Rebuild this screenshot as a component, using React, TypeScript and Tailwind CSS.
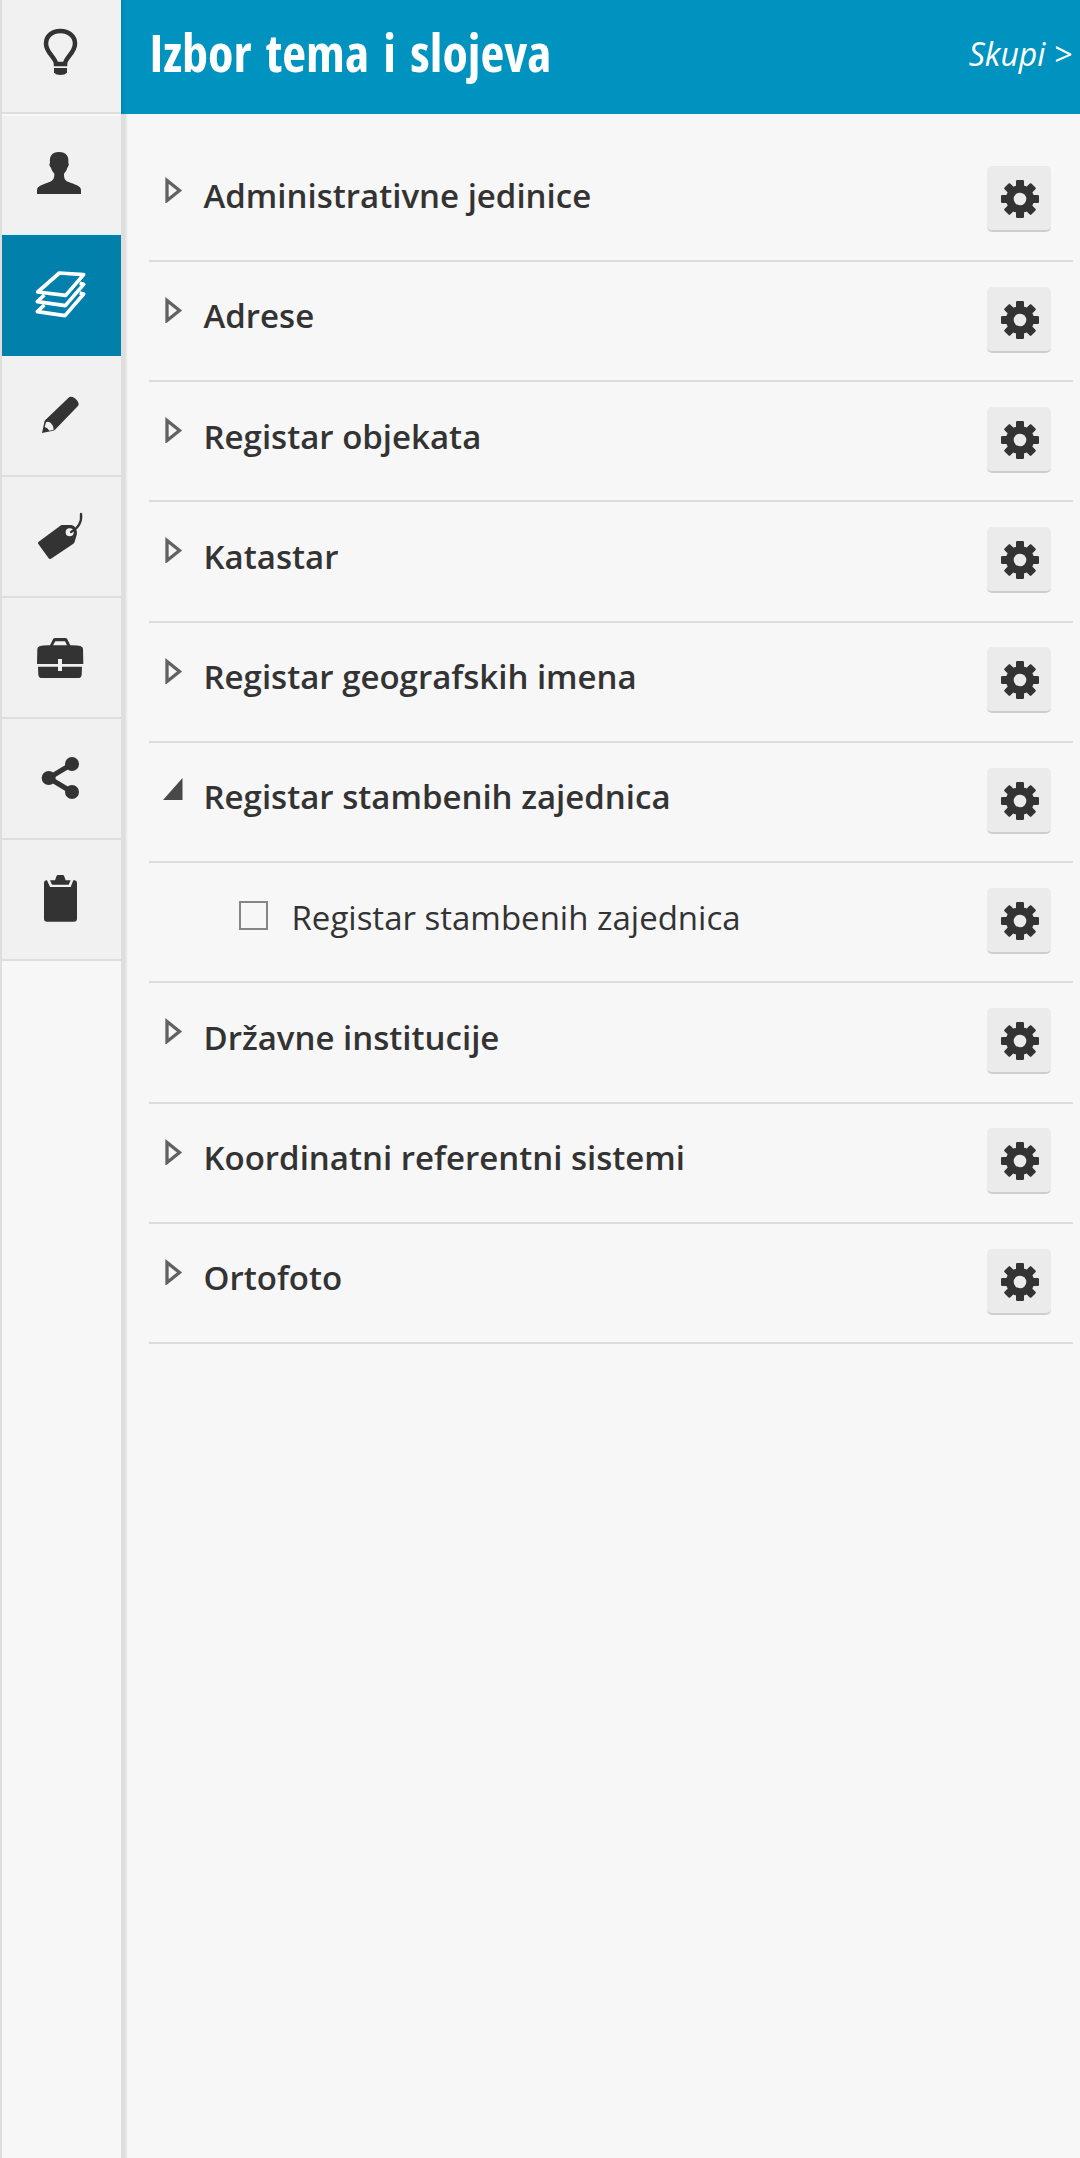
import type { ReactNode } from "react";

type Row = {
  label: string;
  height: string;
  text: string;
  button: string;
  state: "closed" | "open" | "layer";
};

const rows: Row[] = [
  { label: "Administrativne jedinice", height: "h-[120px]", text: "mt-[30px]", button: "mt-[24px]", state: "closed" },
  { label: "Adrese", height: "h-[120px]", text: "mt-[30px]", button: "mt-[25px]", state: "closed" },
  { label: "Registar objekata", height: "h-[120px]", text: "mt-[31px]", button: "mt-[25px]", state: "closed" },
  { label: "Katastar", height: "h-[121px]", text: "mt-[31px]", button: "mt-[25px]", state: "closed" },
  { label: "Registar geografskih imena", height: "h-[120px]", text: "mt-[30px]", button: "mt-[24px]", state: "closed" },
  { label: "Registar stambenih zajednica", height: "h-[120px]", text: "mt-[30px]", button: "mt-[25px]", state: "open" },
  { label: "Registar stambenih zajednica", height: "h-[120px]", text: "mt-[31px]", button: "mt-[25px]", state: "layer" },
  { label: "Državne institucije", height: "h-[121px]", text: "mt-[31px]", button: "mt-[25px]", state: "closed" },
  { label: "Koordinatni referentni sistemi", height: "h-[120px]", text: "mt-[30px]", button: "mt-[24px]", state: "closed" },
  { label: "Ortofoto", height: "h-[120px]", text: "mt-[30px]", button: "mt-[25px]", state: "closed" },
];

const tools: { name: string; box: string; active?: boolean; art: ReactNode }[] = [
  {
    name: "Pomoć",
    box: "6 -21 357 357",
    art: (
      <>
        <path
          d="M181 93c-25 0-43 15-43 38 0 27 30 43 30 61h27c0-18 30-34 30-61 0-23-19-38-44-38Z"
          fill="none"
          stroke="#333"
          strokeWidth="13.5"
        />
        <path d="M162 204h39v14q-6 7-19.500 7t-19.500-7Z" />
      </>
    ),
  },
  {
    name: "Korisnik",
    box: "6 342 357 357",
    art: (
      <path d="M177 456c22 0 30 13 28 32 3 4 1 11-3 15-2 7-5 12-10 18 0 14 2 20 12 24 20 8 39 12 39 25v12H111v-12c0-13 20-17 39-25 10-4 13-10 13-24-5-6-8-11-10-18-5-4-6-11-3-15-2-19 5-32 27-32Z" />
    ),
  },
  {
    name: "Slojevi",
    box: "6 15 357 357",
    active: true,
    art: (
      <g fill="none" stroke="#fff" strokeWidth="11" strokeLinejoin="round">
        <path d="M178 129 251 134 197 196 113 186Z" />
        <path d="M133 195 112 215 196 227 251 163 239 160" />
        <path d="M133 225 112 245 195 257 251 192 239 189" />
      </g>
    ),
  },
  {
    name: "Crtanje",
    box: "6 378 357 357",
    art: (
      <>
        <path d="m208 501q4-2 10 0 14 6 18 20 0 5-3 8l-68 70q-3 3-6 3l-33 7 7-32q0-4 3-7Z" />
        <path d="M138 577q7-4 15 3 8 7 8 19l-13 3q-5-9-14-11Z" fill="#f1f1f1" />
      </>
    ),
  },
  {
    name: "Oznake",
    box: "6 21 357 357",
    art: (
      <>
        <path d="M183 166q3-2 7-1h24q9 1 13 10 4 7 4 16l-7 24q-1 4-5 7l-66 44q-4 3-7-1l-31-43q-3-4 1-7Z" />
        <circle cx="209" cy="187" r="12" fill="#f1f1f1" />
        <path
          d="M213 186c21-11 33-28 30-54"
          fill="none"
          stroke="#333"
          strokeWidth="7"
          strokeLinecap="round"
        />
      </>
    ),
  },
  {
    name: "Alati",
    box: "6 384 357 357",
    art: (
      <>
        <path d="M150 526 159 508q2-4 6-4h31q4 0 6 4l9 18q38-1 38 10l1 46h-64v-15h-12v15h-63l1-46q0-11 39-10Zm9 0h42l-6-12h-29Z" />
        <path d="M114 590h60v13h12v-13h60l-1 24q-1 10-11 10H126q-10 0-11-10Z" />
      </>
    ),
  },
  {
    name: "Dijeljenje",
    box: "6 27 357 357",
    art: (
      <>
        <path d="M216 162 146 204 216 246" fill="none" stroke="#333" strokeWidth="15" />
        <circle cx="216" cy="162" r="21" />
        <circle cx="146" cy="204" r="21" />
        <circle cx="216" cy="246" r="21" />
      </>
    ),
  },
  {
    name: "Izvještaj",
    box: "6 390 357 357",
    art: (
      <>
        <path d="M141 511h-2q-7 1-7 8v107q0 9 9 9h80q10 0 10-9V519q0-7-7-8h-4l-8 20h-62Z" />
        <path d="M150 511h15l5-14q1-2 4-2h14q3 0 4 2l5 14h15l-6 13h-50Z" />
      </>
    ),
  },
];

const teeth = [0, 45, 90, 135];

function Gear() {
  return (
    <svg viewBox="-19 -19 38 38" className="mt-[2px] ml-[2px] size-[38px]" fill="#333">
      {teeth.map((a) => (
        <rect key={a} x="-4" y="-19" width="8" height="38" rx="1.200" transform={`rotate(${a})`} />
      ))}
      <circle r="14" />
      <circle r="6.300" fill="#ebebeb" />
    </svg>
  );
}

function Marker({ state }: { state: Row["state"] }) {
  if (state === "layer") {
    return <span className="mt-[38px] ml-[90px] size-[29px] border-2 border-[#858585]" />;
  }
  return (
    <svg viewBox="0 0 22 28" className="mt-[33px] ml-[13px] h-[28px] w-[22px] blur-[0.6px]">
      {state === "open" ? (
        <path d="M1 24 20.500 2V24Z" fill="#484848" />
      ) : (
        <path d="M5 5.500V25.500L17.500 15.500Z" fill="none" stroke="#626262" strokeWidth="3.300" />
      )}
    </svg>
  );
}

function LayerRow({ row }: { row: Row }) {
  return (
    <li className={`flex items-start border-b-2 border-[#dcdcdc] ${row.height}`}>
      <Marker state={row.state} />
      <span
        className={`grow text-[33px] leading-[48px] ${row.text} ${
          row.state === "layer" ? "ml-[23.5px] font-normal" : "ml-[19.5px] font-semibold"
        }`}
      >
        {row.label}
      </span>
      <button
        aria-label="Postavke"
        className={`mr-[22px] flex h-[66px] w-[64px] shrink-0 items-center justify-center rounded-[5px] border-b-2 border-[#cecece] bg-[#ebebeb] ${row.button}`}
      >
        <Gear />
      </button>
    </li>
  );
}

export default function App() {
  return (
    <div className="flex h-[2158px] w-[1080px] overflow-hidden bg-[#f7f7f7] font-['Open_Sans',sans-serif] text-[#333]">
      <nav className="flex w-[121px] shrink-0 flex-col border-l-2 border-[#dedede]">
        {tools.map((t, i) => (
          <button
            key={t.name}
            aria-label={t.name}
            className={
              t.active
                ? "flex h-[121px] items-start bg-[#0080aa]"
                : i === 0
                  ? "flex h-[114px] items-end border-b-2 border-[#dedede] bg-[#f1f1f1]"
                  : i === 1
                    ? "flex h-[121px] items-start border-t-2 border-b-2 border-t-[#f9f9f9] border-b-[#e2f3f8] bg-[#f1f1f1]"
                    : "flex h-[121px] items-start border-b-2 border-[#dedede] bg-[#f1f1f1]"
            }
          >
            <svg viewBox={t.box} className={i === 1 ? "-mt-[2px] size-[119px]" : "size-[119px]"} fill="#333">
              {t.art}
            </svg>
          </button>
        ))}
      </nav>
      <main className="flex grow flex-col">
        <header className="flex h-[114px] items-center justify-between bg-[#0093c0] bg-linear-to-r from-[#0086b2] from-0% to-[#0093c0] to-[6px] pr-[8px] pl-[28.5px] text-white">
          <h1 className="-mt-[10px] text-[52px] leading-[70px] font-bold whitespace-nowrap [font-stretch:75%] [word-spacing:5px]">
            Izbor tema i slojeva
          </h1>
          <a className="-mt-[6px] text-[32px] leading-[48px] italic">Skupi &gt;</a>
        </header>
        <div className="flex grow bg-linear-to-r from-[#dedede] from-[4px] to-[#f7f7f7] to-[7px]">
          <ul className="mt-[28px] ml-[28px] w-[924px]">
            {rows.map((row, i) => (
              <LayerRow key={i} row={row} />
            ))}
          </ul>
        </div>
      </main>
    </div>
  );
}
